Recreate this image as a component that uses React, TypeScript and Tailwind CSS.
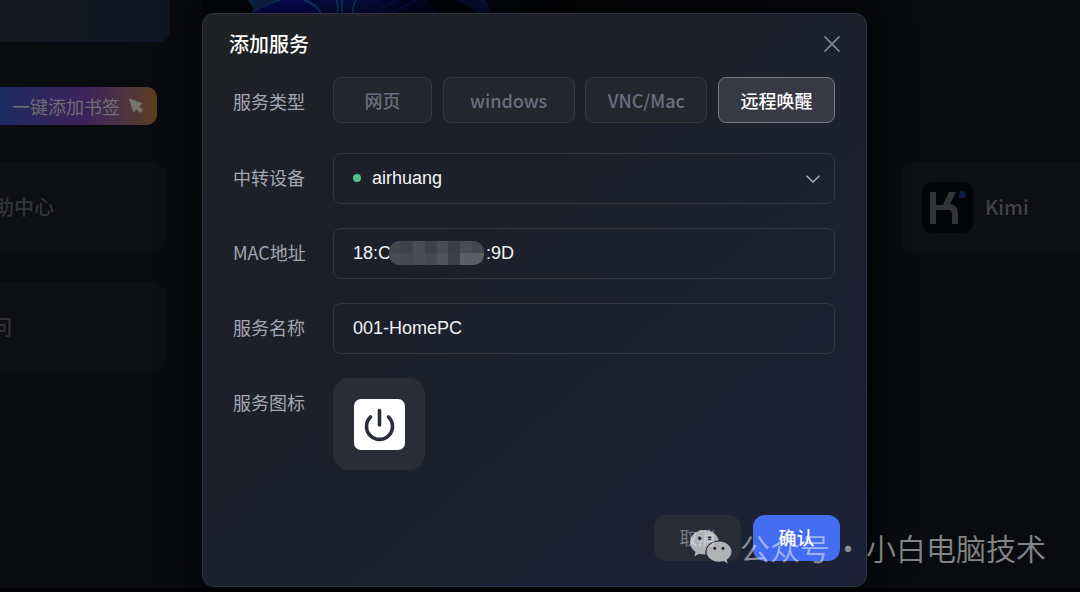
import { useState } from 'react';

const serviceTypes = [
  { id: 'web', name: '网页', width: 'w-[99px]' },
  { id: 'windows', name: 'windows', width: 'w-[132px]' },
  { id: 'vnc', name: 'VNC/Mac', width: 'w-[122px]' },
  { id: 'wol', name: '远程唤醒', width: 'w-[117px]' },
];

// Pixelated cover over the middle of the MAC address
const mosaic = [
  'bg-[#43454e]', 'bg-[#3f414b]', 'bg-[#4b4d56]', 'bg-[#3f414b]', 'bg-[#4b4d56]', 'bg-[#3b3d49]', 'bg-[#4b4d56]', 'bg-[#454750]',
  'bg-[#494b54]', 'bg-[#474952]', 'bg-[#4b4d56]', 'bg-[#474952]', 'bg-[#51535c]', 'bg-[#3d3f4b]', 'bg-[#5b5d66]', 'bg-[#5b5d66]',
];

const labelClass = 'flex h-[51px] w-[100px] shrink-0 items-center pb-[3px] text-lg text-[#a4a5b4]';
const fieldClass = 'h-[51px] w-full rounded-lg border border-[#343641] bg-transparent px-[19px] font-["Liberation_Sans",sans-serif] text-lg text-[#f2f2f4] outline-none';

function Wallpaper() {
  return (
    <svg className="h-[13px] w-[318px] shrink-0" viewBox="0 0 318 13" aria-hidden="true">
      <defs>
        <linearGradient id="petal" x1="0" x2="1">
          <stop offset="0" stopColor="#12355f" />
          <stop offset="0.2" stopColor="#070c50" />
          <stop offset="0.45" stopColor="#071253" />
          <stop offset="0.6" stopColor="#040936" />
          <stop offset="0.8" stopColor="#03061f" />
          <stop offset="1" stopColor="#08164a" />
        </linearGradient>
      </defs>
      <rect width="318" height="13" fill="#04060b" />
      <path d="M46 0 L52 10 L50 13 H287 Q288 5 283 0Z" fill="url(#petal)" />
      <path d="M78 0 Q60 4 50 13 H118 Q112 4 102 0Z" fill="#070b66" />
      <path d="M78 0 Q62 4 50 13" stroke="#123a78" strokeWidth="2" fill="none" />
      <path d="M102 0 Q114 4 119 13" stroke="#164a8a" strokeWidth="2" fill="none" />
      <path d="M134 0 Q137 7 135 13 M140 0 V13 M154 0 Q150 7 151 13" stroke="#164a7a" strokeWidth="1.500" fill="none" />
      <path d="M176 0 Q162 6 156 13 M196 0 Q182 6 172 13 M214 0 Q200 8 190 13" stroke="#0a1252" strokeWidth="2" fill="none" />
      <path d="M225 0 H252 Q268 5 274 13 H236 Q234 5 225 0Z" fill="#010208" />
    </svg>
  );
}

function CursorIcon() {
  return (
    <svg className="h-4 w-4" viewBox="0 0 16 16" aria-hidden="true">
      <path d="M1.500 1 L14 5.500 L10.500 8.300 L14.500 12 L12.300 14.500 L8.500 11 L5.700 14 Z" fill="#77736f" stroke="#77736f" strokeLinejoin="round" />
    </svg>
  );
}

function KimiLogo() {
  return (
    <svg className="h-[51px] w-[51px]" viewBox="0 0 51 51" aria-hidden="true">
      <rect width="51" height="51" rx="10" fill="#040506" />
      <path d="M8 10 H14 V23 H21 L27 10 H34 L28 22 Q36 23 36 31 V42 H30 V32 Q30 28 26 28 H14 V42 H8Z" fill="#333437" />
      <path d="M40.500 9 Q44 9 44 12.500 Q44 16 40.500 16 H37 V12.500 Q37 9 40.500 9Z" fill="#0e1d48" />
    </svg>
  );
}

function PowerIcon() {
  return (
    <svg className="h-[51px] w-[51px]" viewBox="0 0 51 51" aria-hidden="true">
      <rect width="51" height="51" rx="7" fill="#fff" />
      <path d="M16.500 18 A13 13 0 1 0 34.500 18" fill="none" stroke="#2a2e3b" strokeWidth="3.600" strokeLinecap="round" />
      <path d="M25.500 11.500 V26" stroke="#2a2e3b" strokeWidth="3.600" strokeLinecap="round" />
    </svg>
  );
}

function WechatIcon() {
  return (
    <svg className="h-[34px] w-[42px]" viewBox="0 0 42 34" fill="#ffffff" fillOpacity="0.640" aria-hidden="true">
      <path fillRule="evenodd" d="M14.500 0 C6.500 0 0 5.400 0 12.200 C0 16.200 2.200 19.600 5.500 21.900 L4.300 26.200 L9.200 23.700 C11.200 24.300 13 24.600 15.500 24.500 C14 17 20.500 10.500 28.800 10.500 C27.500 4.500 21.500 0 14.500 0Z M9.800 6.300 A1.900 1.900 0 1 1 9.800 10.100 A1.900 1.900 0 1 1 9.800 6.300Z M19.600 6.300 A1.900 1.900 0 1 1 19.600 10.100 A1.900 1.900 0 1 1 19.600 6.300Z" />
      <path fillRule="evenodd" d="M29 11.500 C22 11.500 16.500 16 16.500 21.600 C16.500 27.300 22 31.800 29 31.800 C30.700 31.800 32.200 31.500 33.600 31.100 L37.700 33.400 L36.700 29.700 C39.700 27.800 41.500 25 41.500 21.600 C41.500 16 36 11.500 29 11.500Z M24.800 16.700 A1.600 1.600 0 1 1 24.800 19.900 A1.600 1.600 0 1 1 24.800 16.700Z M33 16.700 A1.600 1.600 0 1 1 33 19.900 A1.600 1.600 0 1 1 33 16.700Z" />
    </svg>
  );
}

function Backdrop() {
  return (
    <div className="flex min-h-screen justify-between bg-[#090b0f] text-xl font-medium text-[#333437]">
      <div className="flex w-[170px] flex-col">
        <div className="h-[42px] rounded-br-xl bg-linear-to-r from-[#15171f] to-[#0f1525]" />
        <button className="mt-[45px] flex h-[38px] w-[157px] items-center gap-2 rounded-r-[10px] bg-linear-to-r from-[#1b2a61] via-[#3d2259] via-55% to-[#5e3d1c] pl-3 text-lg font-normal whitespace-nowrap text-[#706d72]">
          一键添加书签
          <CursorIcon />
        </button>
        <div className="mt-[37px] flex h-[90px] w-[166px] items-center overflow-hidden rounded-r-xl bg-[#0d0f12]">
          <span className="-ml-1.5">助中心</span>
        </div>
        <div className="mt-[30px] flex h-[90px] w-[166px] items-center overflow-hidden rounded-r-xl bg-[#0d0f12]">
          <span className="-ml-2">问</span>
        </div>
      </div>
      <div className="flex flex-1 bg-linear-to-r from-[#090b0f] via-[#040507] to-[#090b0f] pl-8">
        <Wallpaper />
      </div>
      <div className="w-[179px] pt-[162px]">
        <div className="flex h-[90px] items-center gap-3 rounded-l-xl bg-[#0d0f12] pl-[21px] text-[#414246]">
          <KimiLogo />
          <span>Kimi</span>
        </div>
      </div>
    </div>
  );
}

export default function App() {
  const [type, setType] = useState('wol');
  const [mac, setMac] = useState(`18:C${'\u00a0'.repeat(19)}:9D`);
  const [name, setName] = useState('001-HomePC');

  return (
    <div className="relative min-h-screen overflow-hidden font-['Noto_Sans_CJK_SC',sans-serif]">
      <Backdrop />

      <div className="absolute inset-0 flex items-start justify-center border-b-4 border-[#020204] pt-[13px] pr-[11px]">
        <form
          className="w-full max-w-[665px] rounded-xl border border-[#30333e] bg-linear-to-br from-[#202124] via-[#1d202a] via-30% to-[#1c2236] shadow-[0_0_32px_8px_#000000b0]"
          onSubmit={(e) => e.preventDefault()}
        >
          <div className="flex h-[63px] items-center justify-between px-[26px] pb-1">
            <h2 className="text-xl font-medium text-white">添加服务</h2>
            <button type="button" aria-label="关闭">
              <svg className="h-4 w-4" viewBox="0 0 16 16" stroke="#8c90a0" strokeWidth="1.500" aria-hidden="true">
                <path d="M0.500 0.500 L15.500 15.500 M15.500 0.500 L0.500 15.500" />
              </svg>
            </button>
          </div>

          <div className="flex flex-col gap-6 pr-[31px] pl-[30px]">
            <div className="flex h-[52px] items-start">
              <span className={labelClass}>服务类型</span>
              <div className="flex flex-1 justify-between">
                {serviceTypes.map((t) => (
                  <button
                    key={t.id}
                    type="button"
                    onClick={() => setType(t.id)}
                    className={`h-[46px] rounded-lg border text-lg font-medium ${t.width} ${
                      type === t.id
                        ? 'border-[#777988] bg-[#383945] text-white'
                        : 'border-[#353741] bg-[#24262e] text-[#6b6d80]'
                    }`}
                  >
                    {t.name}
                  </button>
                ))}
              </div>
            </div>

            <div className="flex items-center">
              <label htmlFor="device" className={labelClass}>中转设备</label>
              <div className="relative flex-1">
                <select id="device" className={`${fieldClass} appearance-none pb-0.5 pl-[38px]`}>
                  <option>airhuang</option>
                </select>
                <span className="pointer-events-none absolute inset-y-0 left-5 flex items-center pb-0.5">
                  <span className="h-2 w-2 rounded-full bg-[#51bf88]" />
                </span>
                <span className="pointer-events-none absolute inset-y-0 right-[15px] flex items-center">
                  <svg className="h-2 w-3.5" viewBox="0 0 14 8" fill="none" stroke="#b4b6c0" strokeWidth="1.300" aria-hidden="true">
                    <path d="M0.500 0.700 L7 7 L13.500 0.700" />
                  </svg>
                </span>
              </div>
            </div>

            <div className="flex items-center">
              <label htmlFor="mac" className={labelClass}>MAC地址</label>
              <div className="relative flex-1">
                <input id="mac" className={fieldClass} value={mac} onChange={(e) => setMac(e.target.value)} />
                <div className="pointer-events-none absolute top-[13px] left-14 grid h-6 w-[95px] grid-cols-8 overflow-hidden rounded-[10px]">
                  {mosaic.map((color, i) => (
                    <span key={i} className={color} />
                  ))}
                </div>
              </div>
            </div>

            <div className="flex items-center">
              <label htmlFor="name" className={labelClass}>服务名称</label>
              <div className="flex-1">
                <input id="name" className={fieldClass} value={name} onChange={(e) => setName(e.target.value)} />
              </div>
            </div>

            <div className="flex items-start">
              <span className={labelClass}>服务图标</span>
              <button type="button" aria-label="服务图标" className="flex h-[92px] w-[92px] items-center justify-center rounded-2xl bg-[#2a2d37]">
                <PowerIcon />
              </button>
            </div>
          </div>

          <div className="flex justify-end gap-3 px-[26px] pt-[45px] pb-[25px] text-lg">
            <button type="button" className="h-[46px] w-[87px] rounded-xl bg-[#292b36] pb-0.5 text-[#777988]">取消</button>
            <button type="submit" className="h-[46px] w-[87px] rounded-xl bg-[#446cf0] pb-0.5 font-medium text-white">确认</button>
          </div>
        </form>
      </div>

      <div className="pointer-events-none absolute right-[34px] bottom-[27px] flex items-center text-3xl font-[350] whitespace-nowrap text-white/50">
        <WechatIcon />
        <span className="ml-2">公众号</span>
        <span className="w-9 text-center">·</span>
        <span>小白电脑技术</span>
      </div>
    </div>
  );
}
